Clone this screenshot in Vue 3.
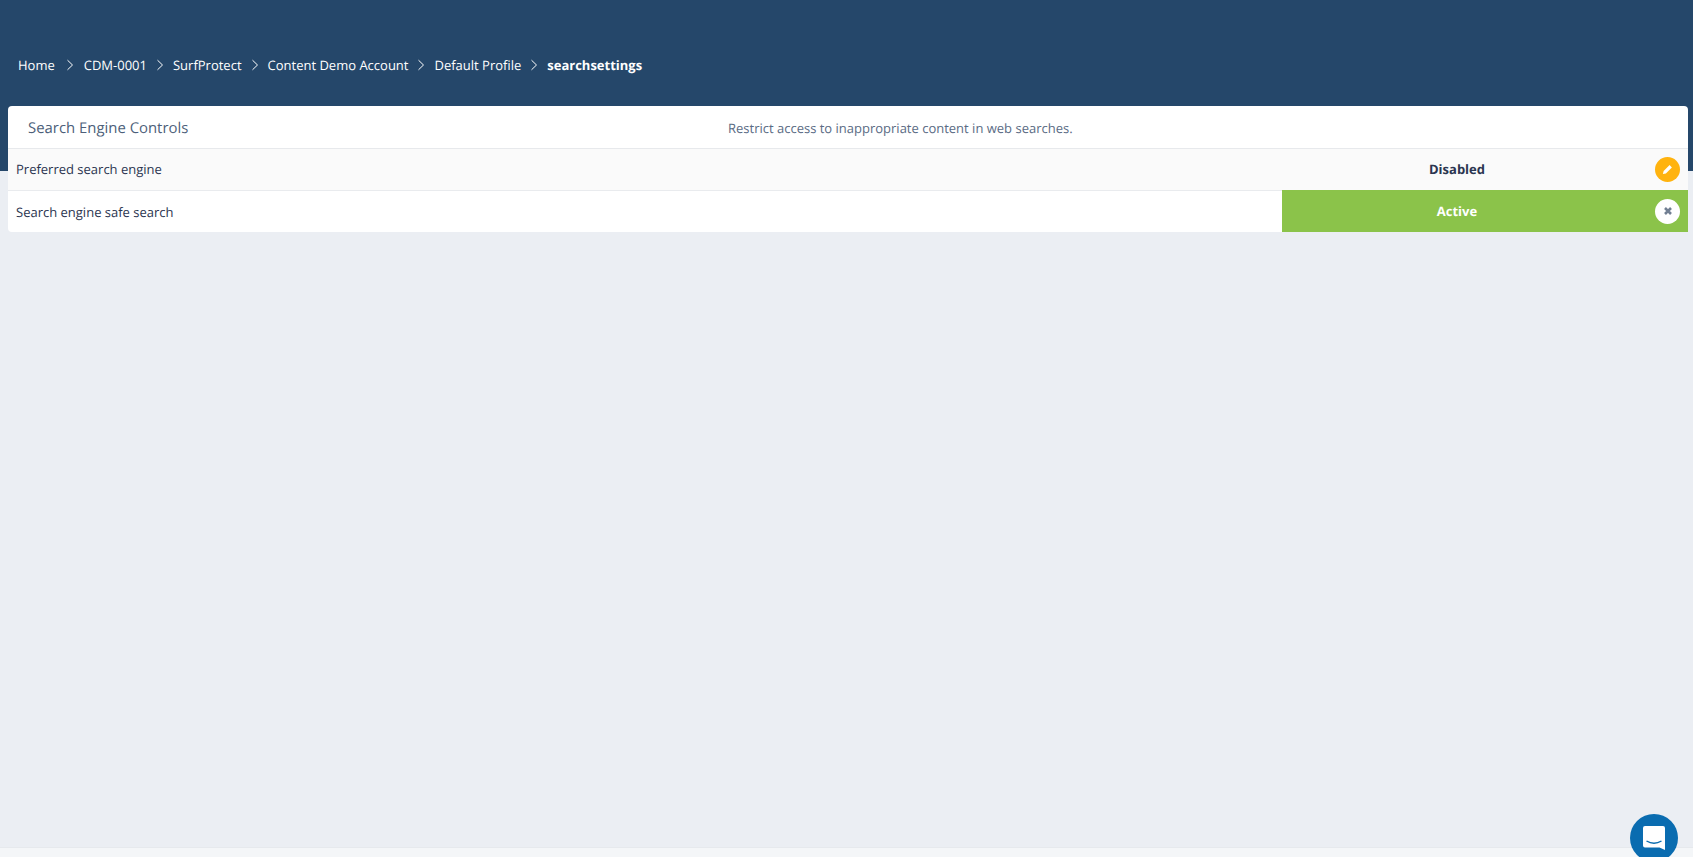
<script setup>
const crumbs = ['Home', 'CDM-0001', 'SurfProtect', 'Content Demo Account', 'Default Profile']
</script>

<template>
  <div class="page">
    <header class="banner">
      <nav class="crumbs">
        <template v-for="(c, i) in crumbs" :key="c">
          <span>{{ c }}</span>
          <svg class="chev" :class="{ first: i === 0 }" width="8" height="12" viewBox="0 0 8 12"><path d="M1.5 1.2 6.5 6l-5 4.8" fill="none" stroke="#fff" stroke-width="1"/></svg>
        </template>
        <strong>searchsettings</strong>
      </nav>
    </header>
    <main class="card">
      <div class="head">
        <h1>Search Engine Controls</h1>
        <p>Restrict access to inappropriate content in web searches.</p>
      </div>
      <div class="row alt">
        <div class="label up">Preferred search engine</div>
        <div class="value">
          <b class="up">Disabled</b>
          <span class="btn edit">
            <svg width="11" height="11" viewBox="0 0 11 11"><path d="M7.6 1.1 9.9 3.4 3.9 9.4 0.9 10.1 1.6 7.1Z" fill="#fff"/></svg>
          </span>
        </div>
      </div>
      <div class="row">
        <div class="label">Search engine safe search</div>
        <div class="value on">
          <b>Active</b>
          <span class="btn clear">
            <svg width="10" height="10" viewBox="0 0 10 10"><path d="M2 2 8 8M8 2 2 8" stroke="#717f92" stroke-width="2.6"/></svg>
          </span>
        </div>
      </div>
    </main>
    <footer class="foot"></footer>
    <div class="chat">
      <svg width="22" height="24" viewBox="0 0 22 24"><path d="M2 0H20Q22 0 22 2V24L16.5 21.5H2Q0 21.5 0 19.5V2Q0 0 2 0Z" fill="#fff"/><path d="M3.5 15Q11 19.5 18.5 15" fill="none" stroke="#0a6cb0" stroke-width="1.4"/></svg>
    </div>
  </div>
</template>

<style>
html, body { margin: 0; overflow: hidden; background: #ebeef3; }
</style>

<style scoped>
.page { position: relative; height: 857px; display: flex; flex-direction: column; background: #ebeef3; font-family: "Open Sans", sans-serif; text-rendering: geometricPrecision; overflow: hidden; }
.banner { height: 171px; flex: none; background: #25476a; box-sizing: border-box; padding: 56px 18px 0; }
.crumbs { display: flex; align-items: center; height: 18px; color: #fff; font-size: 13px; line-height: 18px; white-space: nowrap; }
.chev { margin: 0 9px; }
.chev.first { margin: 0 10px 0 11px; }
.crumbs strong { font-weight: 700; }
.card { margin: -65px 5px 0 8px; background: #fff; border-radius: 4px 4px 0 4px; overflow: hidden; color: #2b3550; flex: none; }
.head { position: relative; height: 42px; display: flex; align-items: center; padding-left: 20px; border-bottom: 1px solid #e7e9ec; }
.head h1 { margin: 0; padding-top: 1px; font-size: 14.9px; font-weight: 400; color: #4d5f7a; width: 240px; flex: none; }
.head p { margin: 0; font-size: 13px; color: #5a6b84; padding: 1px 0 0 460px; white-space: nowrap; }
.row { display: flex; height: 41px; align-items: stretch; font-size: 13px; }
.row.alt { background: #fafafa; border-bottom: 1px solid #e9ebee; height: 42px; box-sizing: border-box; }
.label { flex: 1; display: flex; align-items: center; padding-left: 8px; }
.up { padding-bottom: 1px; }
.value { width: 406px; flex: none; display: flex; align-items: center; box-sizing: border-box; padding-right: 8px; position: relative; }
.value b { width: 350px; text-align: center; font-weight: 700; }
.value.on { background: #8bc34a; color: #fff; margin-top: -1px; height: 42px; }
.btn { margin-left: auto; width: 25px; height: 25px; border-radius: 50%; display: flex; align-items: center; justify-content: center; }
.edit { background: #ffb30f; }
.clear { background: #fff; }
.foot { position: absolute; left: 0; right: 0; bottom: 0; height: 10px; background: #f4f6f8; border-top: 1px solid #e6e9ed; box-sizing: border-box; }
.chat { position: absolute; left: 1630px; top: 814px; width: 48px; height: 48px; border-radius: 50%; background: #0a6cb0; display: flex; justify-content: center; padding-top: 12px; box-sizing: border-box; }
</style>
